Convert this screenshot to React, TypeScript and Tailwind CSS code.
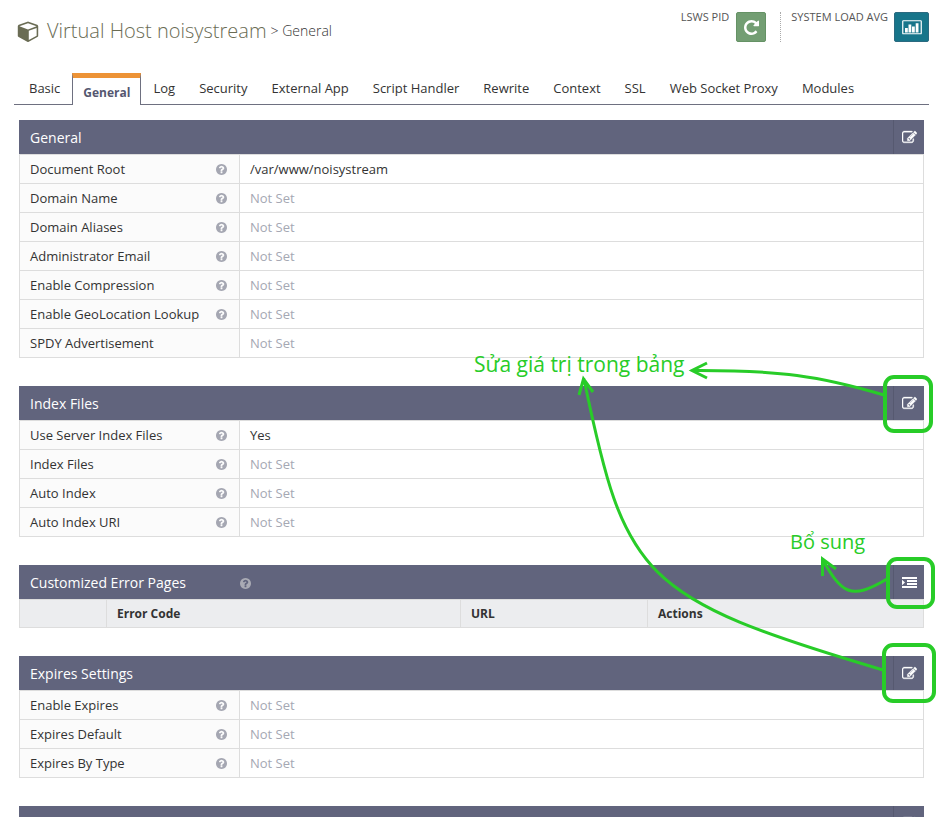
import React from "react";

type IconProps = { className?: string };

const CubeIcon = ({ className }: IconProps) => (
  <svg className={className} viewBox="0 0 1664 1792" fill="currentColor" aria-hidden="true">
    <path d="M896 1629l640-349v-636l-640 233v752zm-64-865l698-254-698-254-698 254zm832-252v768q0 35-18 65t-49 47l-704 384q-28 16-61 16t-61-16l-704-384q-31-17-49-47t-18-65v-768q0-40 23-73t61-47l704-256q22-8 44-8t44 8l704 256q38 14 61 47t23 73z" />
  </svg>
);

const RepeatIcon = ({ className }: IconProps) => (
  <svg className={className} viewBox="128 128 1536 1536" fill="currentColor" aria-hidden="true">
    <path d="M1664 256v448q0 26-19 45t-45 19h-448q-42 0-59-40-17-39 14-69l138-138q-148-137-349-137-104 0-198.5 40.5t-163.5 109.5-109.5 163.5-40.5 198.5 40.5 198.5 109.5 163.5 163.5 109.5 198.5 40.5q119 0 225-52t179-147q7-10 23-12 15 0 25 9l137 138q9 8 9.5 20.5t-7.5 22.5q-109 132-264 204.5t-327 72.5q-156 0-298-61t-245-164-164-245-61-298 61-298 164-245 245-164 298-61q147 0 284.5 55.5t244.5 156.5l130-129q29-31 70-14 39 17 39 59z" />
  </svg>
);

const ChartIcon = ({ className }: IconProps) => (
  <svg className={className} viewBox="0 0 20 15" fill="currentColor" aria-hidden="true">
    <rect x="0.75" y="0.75" width="18.5" height="13" rx="0.6" fill="none" stroke="currentColor" strokeWidth="1.2" />
    <path d="M3 8h2.8v4.5H3zM6.5 4.5h2.8v8H6.5zM10 6.500h2.800v6H10zM13.700 3.200h2.800v9.300h-2.800z" />
  </svg>
);

const HelpIcon = ({ className }: IconProps) => (
  <svg className={className} viewBox="128 128 1536 1536" fill="currentColor" aria-hidden="true">
    <path d="M1024 1376v-192q0-14-9-23t-23-9h-192q-14 0-23 9t-9 23v192q0 14 9 23t23 9h192q14 0 23-9t9-23zm256-672q0-88-55.5-163t-138.5-116-170-41q-243 0-371 213-15 24 8 42l132 100q7 6 19 6 16 0 25-12 53-68 86-92 34-24 86-24 48 0 85.5 26t37.5 59q0 38-20 61t-68 45q-63 28-115.5 86.5t-52.5 125.5v36q0 14 9 23t23 9h192q14 0 23-9t9-23q0-19 21.5-49.5t54.5-49.5q32-18 49-28.5t46-35 44.5-48 28-60.5 12.5-81zm384 192q0 209-103 385.5t-279.5 279.5-385.5 103-385.5-103-279.5-279.5-103-385.5 103-385.5 279.5-279.5 385.5-103 385.5 103 279.5 279.5 103 385.5z" />
  </svg>
);

const EditIcon = ({ className }: IconProps) => (
  <svg className={className} viewBox="0 0 1792 1792" fill="currentColor" stroke="currentColor" strokeWidth="40" aria-hidden="true">
    <path d="M888 1184l116-116-152-152-116 116v56h96v96h56zm440-720q-16-16-33 1l-350 350q-17 17-1 33t33-1l350-350q17-17 1-33zm80 594v190q0 119-84.5 203.5t-203.5 84.5h-832q-119 0-203.5-84.5t-84.5-203.5v-832q0-119 84.5-203.5t203.5-84.5h832q63 0 117 25 15 7 18 23 3 17-9 29l-49 49q-14 14-32 8-23-6-45-6h-832q-66 0-113 47t-47 113v832q0 66 47 113t113 47h832q66 0 113-47t47-113v-126q0-13 9-22l64-64q15-15 35-7t20 29zm-96-738l288 288-672 672h-288v-288zm444 132l-92 92-288-288 92-92q28-28 68-28t68 28l152 152q28 28 28 68t-28 68z" />
  </svg>
);

const IndentIcon = ({ className }: IconProps) => (
  <svg className={className} viewBox="0 0 15 11" fill="currentColor" aria-hidden="true">
    <path d="M0 0h15v2H0zM5 3h10v2H5zM5 6h10v2H5zM0 9h15v2H0zM0 2.8L3 5.5L0 8.2z" />
  </svg>
);

const tabs = ["Basic", "General", "Log", "Security", "External App", "Script Handler", "Rewrite", "Context", "SSL", "Web Socket Proxy", "Modules"];

type Row = { label: string; value?: string; noHelp?: boolean };

const generalRows: Row[] = [
  { label: "Document Root", value: "/var/www/noisystream" },
  { label: "Domain Name" },
  { label: "Domain Aliases" },
  { label: "Administrator Email" },
  { label: "Enable Compression" },
  { label: "Enable GeoLocation Lookup" },
  { label: "SPDY Advertisement", noHelp: true },
];
const indexRows: Row[] = [
  { label: "Use Server Index Files", value: "Yes" },
  { label: "Index Files" },
  { label: "Auto Index" },
  { label: "Auto Index URI" },
];
const expiresRows: Row[] = [{ label: "Enable Expires" }, { label: "Expires Default" }, { label: "Expires By Type" }];

function PanelHeader({ title, action = "edit", help }: { title: string; action?: "edit" | "add"; help?: boolean }) {
  return (
    <header className="flex h-[34px] items-stretch bg-[#61647d] text-white">
      <div className="flex flex-1 items-center pt-0.5 pl-[11px]">
        <h2 className="text-sm leading-5">{title}</h2>
        {help && <HelpIcon className="ml-[54px] size-[11px] text-[#a9aab4]" />}
      </div>
      <button
        type="button"
        aria-label={action === "edit" ? "Edit" : "Add"}
        className="flex w-[31px] items-center justify-center border-l border-[#565970]"
      >
        {action === "edit" ? <EditIcon className="size-[15px]" /> : <IndentIcon className="h-[11px] w-[15px]" />}
      </button>
    </header>
  );
}

function SettingsPanel({ title, rows }: { title: string; rows: Row[] }) {
  return (
    <section>
      <PanelHeader title={title} />
      <table className="w-full table-fixed border-collapse text-[13px] leading-5">
        <tbody>
          {rows.map((row) => (
            <tr key={row.label} className="h-[29px]">
              <th scope="row" className="w-[220px] border border-[#dddddd] bg-[#fbfbfb] py-0 pr-3 pl-[10px] text-left font-normal">
                <div className="flex items-center justify-between">
                  {row.label}
                  {!row.noHelp && <HelpIcon className="size-[11px] text-[#a5a7b2]" />}
                </div>
              </th>
              <td className={`border border-[#dddddd] px-[10px] py-0 ${row.value ? "" : "text-[#a5a8b3]"}`}>{row.value ?? "Not Set"}</td>
            </tr>
          ))}
        </tbody>
      </table>
    </section>
  );
}

function Annotations() {
  return (
    <div className="pointer-events-none absolute top-0 right-0 h-[817px] w-[943px] text-[#28cc28]">
      <svg className="absolute inset-0 size-full" viewBox="0 0 943 817" fill="none" stroke="currentColor" strokeWidth="3" aria-hidden="true">
        <g strokeWidth="4">
          <rect x="885" y="377" width="46" height="54" rx="9" />
          <rect x="888" y="559" width="45" height="48" rx="9" />
          <rect x="884" y="645" width="50" height="56" rx="9" />
        </g>
        <path d="M884 395C820 376 780 370 692 370.500M707 363L692 370.500L707 378" />
        <path d="M887 579C850 601 842 593 822 559M822.500 576V559L836 569" />
        <path d="M883 670C640 598 625 578 584 379M579 395L583.500 379L593 392" />
      </svg>
      <span className="absolute top-[350px] left-[474px] text-[21px] leading-7 whitespace-nowrap">Sửa giá trị trong bảng</span>
      <span className="absolute top-[528px] left-[790px] text-xl leading-7 whitespace-nowrap">Bổ sung</span>
    </div>
  );
}

export default function App() {
  return (
    <div className="relative h-screen overflow-hidden bg-white px-[14px] font-['Open_Sans','Noto_Sans',sans-serif] text-[#333333]">
      <div className="flex h-[73px] items-start justify-between">
        <h1 className="flex items-center pt-[14px] pl-[3px] leading-8 font-light">
          <CubeIcon className="mr-2 size-[22px] text-[#6a6c54]" />
          <span className="text-xl leading-8 text-[#6a6c54]">Virtual Host noisystream</span>
          <span className="ml-1 pt-px text-sm leading-8">&gt; General</span>
        </h1>
        <div className="flex pt-3 text-[11px] leading-[9px] text-[#555555]">
          <span>LSWS PID</span>
          <button type="button" aria-label="Restart" className="ml-[7px] flex size-[30px] items-center justify-center rounded-[2px] border border-[#659265] bg-[#739e73] text-white">
            <RepeatIcon className="size-[15px]" />
          </button>
          <div className="ml-[14px] flex h-[30px] border-l border-dotted border-[#aaaaaa] pl-[10px]">
            <span>SYSTEM LOAD AVG</span>
            <button type="button" aria-label="System load" className="ml-[6px] flex h-[30px] w-[35px] items-center justify-center rounded-[2px] border border-[#2b6a80] bg-[#17758a] text-white">
              <ChartIcon className="h-[15px] w-5" />
            </button>
          </div>
        </div>
      </div>

      <nav className="flex h-8 border-b border-[#6e7080] pl-[3px] text-[13px] leading-[31px]">
        {tabs.map((tab) =>
          tab === "General" ? (
            <a key={tab} href="#general" aria-current="page" className="h-8 border-x border-t-[5px] border-x-[#6e7080] border-t-[#ed9336] bg-white px-[10px] text-xs leading-[30px] font-bold text-[#555770]">
              {tab}
            </a>
          ) : (
            <a key={tab} href="#tab" className="px-3 whitespace-nowrap">
              {tab}
            </a>
          ),
        )}
      </nav>

      <main className="flex flex-col gap-7 px-[5px] pt-[15px]">
        <SettingsPanel title="General" rows={generalRows} />
        <SettingsPanel title="Index Files" rows={indexRows} />
        <section>
          <PanelHeader title="Customized Error Pages" action="add" help />
          <table className="w-full table-fixed border-collapse bg-[#ecedef] text-left text-xs leading-5">
            <thead>
              <tr className="h-7">
                <td className="w-[87px] border border-[#dddddd] p-0" />
                <th scope="col" className="w-[354px] border border-[#dddddd] px-[10px] py-0">Error Code</th>
                <th scope="col" className="w-[187px] border border-[#dddddd] px-[10px] py-0">URL</th>
                <th scope="col" className="border border-[#dddddd] px-[10px] py-0">Actions</th>
              </tr>
            </thead>
          </table>
        </section>
        <SettingsPanel title="Expires Settings" rows={expiresRows} />
        <section>
          <PanelHeader title="" />
        </section>
      </main>
      <Annotations />
    </div>
  );
}
